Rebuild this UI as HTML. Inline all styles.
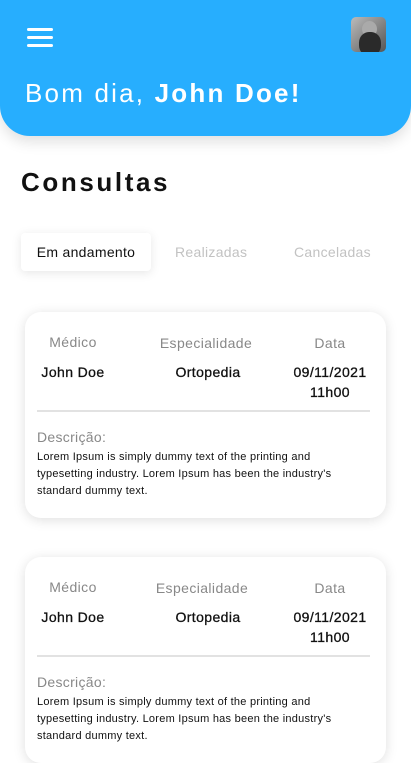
<!DOCTYPE html>
<html><head><meta charset="utf-8"><style>
*{margin:0;padding:0;box-sizing:border-box}
body{width:411px;height:731px;overflow:hidden;background:#fff;font-family:"Liberation Sans",sans-serif;position:relative}
.hdr{position:absolute;left:0;top:0;width:411px;height:136px;background:#27aefe;border-radius:0 0 30px 30px;box-shadow:0 6px 14px rgba(0,0,0,.12)}
.hb{position:absolute;left:27px;width:26px;height:2.5px;background:#fff;border-radius:2px}
.av{position:absolute;left:351px;top:17px;width:35px;height:35px;border-radius:5px;background:linear-gradient(135deg,#bbb,#888 50%,#555);overflow:hidden}
.g{position:absolute;left:25px;top:78px;color:#fff;font-size:26px;font-weight:300;letter-spacing:2.2px;white-space:nowrap}
.g b{font-weight:700}
h1{position:absolute;left:21px;top:167px;font-size:26px;font-weight:700;letter-spacing:2.6px;color:#111}
.tab{position:absolute;top:233px;height:38px;line-height:38px;font-size:14px;color:#c2c2c2;letter-spacing:.3px}
.tab.on{left:21px;width:130px;background:#fff;color:#111;text-align:center;border-radius:4px;box-shadow:0 2px 10px rgba(0,0,0,.1)}
.card{position:absolute;left:25px;width:361px;height:206px;background:#fff;border-radius:16px;box-shadow:0 2px 12px rgba(0,0,0,.13)}
.c{position:absolute;text-align:center;font-size:14px;width:140px;letter-spacing:.4px}
.lb{color:#888}
.v{color:#111;line-height:20px;-webkit-text-stroke:.3px #111}
.dv{position:absolute;left:12px;top:98px;width:333px;height:2px;background:#e2e2e2}
.ds{position:absolute;left:12px;top:117px;color:#888;font-size:14px;letter-spacing:.3px}
.lo{position:absolute;left:12px;top:137px;width:325px;font-size:11px;line-height:17px;color:#111;letter-spacing:.25px}
</style></head><body>
<div class="hdr">
<div class="hb" style="top:28px"></div><div class="hb" style="top:36px"></div><div class="hb" style="top:44px"></div>
<div class="av"><div style="position:absolute;left:11px;top:4px;width:15px;height:16px;border-radius:50%;background:#aaa"></div><div style="position:absolute;left:8px;top:15px;width:22px;height:24px;border-radius:45%;background:#2a2a2a"></div></div>
<div class="g">Bom dia, <b>John Doe!</b></div>
</div>
<h1>Consultas</h1>
<div class="tab on">Em andamento</div>
<div class="tab" style="left:175px">Realizadas</div>
<div class="tab" style="left:294px">Canceladas</div>

<div class="card" style="top:312px">
<div class="c lb" style="left:-22px;top:22px">Médico</div>
<div class="c lb" style="left:111px;top:23px">Especialidade</div>
<div class="c lb" style="left:235px;top:23px">Data</div>
<div class="c v" style="left:-22px;top:50px">John Doe</div>
<div class="c v" style="left:113px;top:50px">Ortopedia</div>
<div class="c v" style="left:235px;top:50px">09/11/2021<br>11h00</div>
<div class="dv"></div>
<div class="ds">Descrição:</div>
<div class="lo">Lorem Ipsum is simply dummy text of the printing and typesetting industry. Lorem Ipsum has been the industry's standard dummy text.</div>
</div>

<div class="card" style="top:557px">
<div class="c lb" style="left:-22px;top:22px">Médico</div>
<div class="c lb" style="left:107px;top:23px">Especialidade</div>
<div class="c lb" style="left:235px;top:23px">Data</div>
<div class="c v" style="left:-22px;top:50px">John Doe</div>
<div class="c v" style="left:113px;top:50px">Ortopedia</div>
<div class="c v" style="left:235px;top:50px">09/11/2021<br>11h00</div>
<div class="dv"></div>
<div class="ds">Descrição:</div>
<div class="lo">Lorem Ipsum is simply dummy text of the printing and typesetting industry. Lorem Ipsum has been the industry's standard dummy text.</div>
</div>
</body></html>
